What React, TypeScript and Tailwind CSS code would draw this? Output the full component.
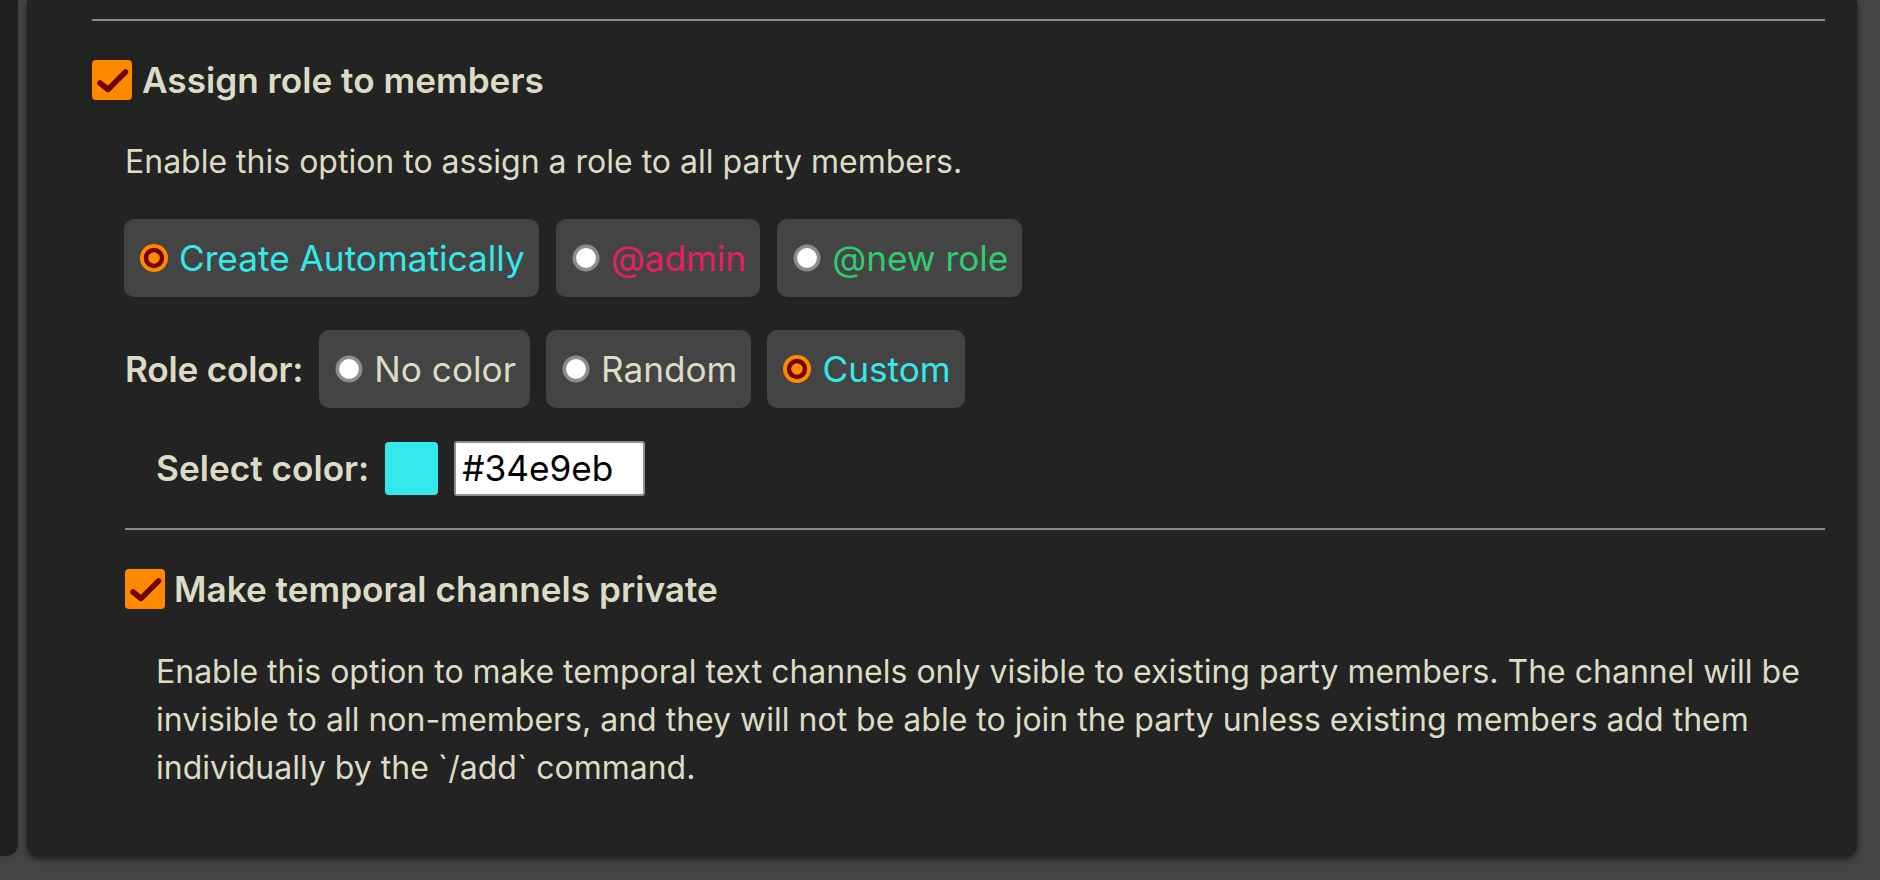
import React from "react";

const FONT = { fontFamily: "Inter, 'Noto Sans', sans-serif" };

function CheckBox() {
  return (
    <svg width="40" height="40" viewBox="0 0 40 40" className="shrink-0">
      <rect x="0" y="0" width="40" height="40" rx="4" fill="#ff8a00" />
      <path d="M8 23 L16 29.5 L33.5 12" fill="none" stroke="#6e0000" strokeWidth="5.5" strokeLinecap="round" strokeLinejoin="round" />
    </svg>
  );
}

function Radio({ checked }: { checked: boolean }) {
  if (checked) {
    return (
      <svg width="28" height="28" viewBox="0 0 28 28" className="shrink-0">
        <circle cx="14" cy="14" r="14" fill="#ff8a00" />
        <circle cx="14" cy="14" r="10.2" fill="#730000" />
        <circle cx="14" cy="14" r="5.8" fill="#ff8a00" />
      </svg>
    );
  }
  return (
    <svg width="28" height="28" viewBox="0 0 28 28" className="shrink-0">
      <circle cx="14" cy="14" r="11.7" fill="#ffffff" stroke="#8d8d8d" strokeWidth="3.6" />
    </svg>
  );
}

type Opt = { label: string; color: string; checked: boolean };

function Option({ opt }: { opt: Opt }) {
  return (
    <div className="flex h-[78px] items-center gap-[11px] rounded-[10px] bg-[#444444] pl-[16px] pr-[14px]">
      <Radio checked={opt.checked} />
      <span className="text-[35.2px]" style={{ color: opt.color }}>{opt.label}</span>
    </div>
  );
}

const roleOpts: Opt[] = [
  { label: "Create Automatically", color: "#34e9eb", checked: true },
  { label: "@admin", color: "#e91e63", checked: false },
  { label: "@new role", color: "#2ecc71", checked: false },
];

const colorOpts: Opt[] = [
  { label: "No color", color: "#dcdcc6", checked: false },
  { label: "Random", color: "#dcdcc6", checked: false },
  { label: "Custom", color: "#34e9eb", checked: true },
];

export default function App() {
  return (
    <div className="flex h-[880px] w-[1880px] gap-[9px] overflow-hidden bg-[#444444] pb-[24px] pr-[23px]" style={FONT}>
      <div className="w-[18px] shrink-0 rounded-br-xl bg-[#1f1f1f] shadow-md" />
      <div className="flex-1 rounded-b-xl bg-[#232323] pl-[65px] pr-[32px] text-[#dcdcc6] shadow-[0_3px_6px_rgba(0,0,0,0.6)]">
        <div className="mt-[19px] h-[2px] bg-[#8a8a8a]" />

        <div className="mt-[39px] flex h-[40px] items-center gap-[10px]">
          <CheckBox />
          <h3 className="text-[35.2px] font-semibold">Assign role to members</h3>
        </div>

        <div className="pl-[33px]">
          <p className="mt-[38px] text-[32px] leading-[48px]">Enable this option to assign a role to all party members.</p>

          <div className="mt-[33px] -ml-[1px] flex gap-[17px]">
            {roleOpts.map(o => <Option key={o.label} opt={o} />)}
          </div>

          <div className="mt-[33px] flex items-center gap-[16px]">
            <span className="text-[35.2px] font-semibold tracking-[-0.2px]">Role color:</span>
            {colorOpts.map(o => <Option key={o.label} opt={o} />)}
          </div>

          <div className="mt-[32px] flex h-[56px] items-center pl-[31px]">
            <span className="text-[35.2px] font-semibold">Select color:</span>
            <div className="ml-[16px] h-[53px] w-[53px] rounded-[4px] bg-[#34e9eb]" />
            <input
              className="ml-[16px] h-[55px] w-[191px] rounded-[3px] border-2 border-[#8f8f8f] bg-white pl-[6px] text-[35.2px] text-black outline-none"
              style={FONT}
              defaultValue="#34e9eb"
            />
          </div>

          <div className="mt-[32px] h-[2px] bg-[#8a8a8a]" />

          <div className="mt-[39px] flex h-[40px] items-center gap-[9px]">
            <CheckBox />
            <h3 className="text-[35.2px] font-semibold">Make temporal channels private</h3>
          </div>

          <p className="mt-[39px] pl-[31px] text-[32px] leading-[48px]">
            Enable this option to make temporal text channels only visible to existing party members. The channel will be invisible to all non-members, and they will not be able to join the party unless existing members add them individually by the `/add` command.
          </p>
        </div>
      </div>
    </div>
  );
}
